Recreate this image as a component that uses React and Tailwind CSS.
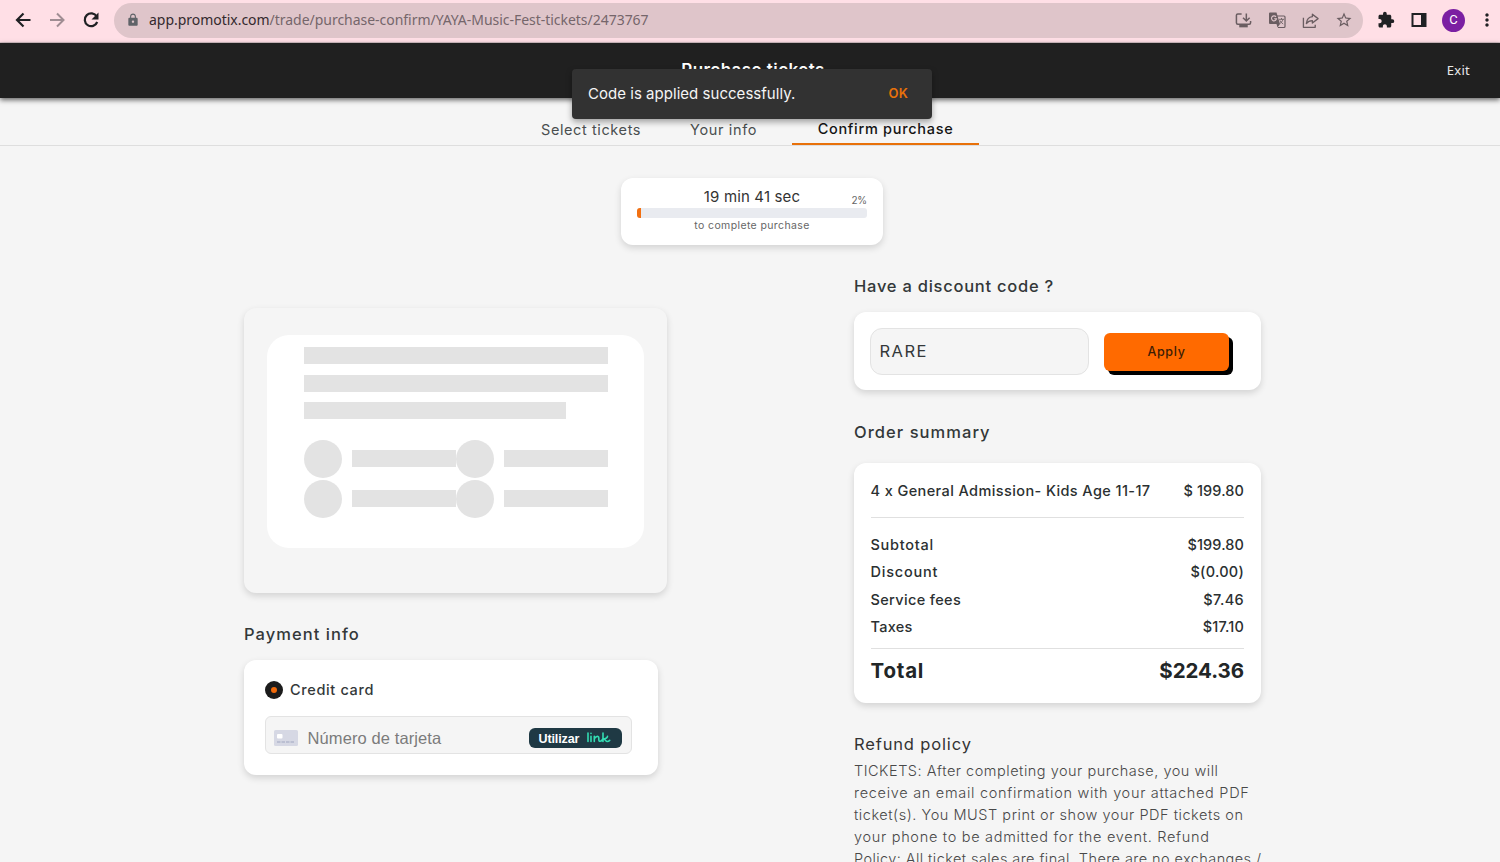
import { MdLock, MdStarBorder, MdExtension, MdMoreVert } from 'react-icons/md';

const summary = [
  { label: 'Subtotal', value: '$199.80', labelCls: 'tracking-[0.75px]', valueCls: 'tracking-[0.1px]' },
  { label: 'Discount', value: '$(0.00)', labelCls: 'tracking-[0.8px]', valueCls: 'tracking-[0.25px]' },
  { label: 'Service fees', value: '$7.46', labelCls: 'tracking-[0.35px]', valueCls: 'tracking-[0.35px]' },
  { label: 'Taxes', value: '$17.10', labelCls: 'tracking-[0.3px]', valueCls: 'tracking-[0.15px]' },
];

const refundLines = [
  { text: 'TICKETS: After completing your purchase, you will', cls: 'tracking-[0.51px]' },
  { text: 'receive an email confirmation with your attached PDF', cls: 'tracking-[0.7px]' },
  { text: 'ticket(s). You MUST print or show your PDF tickets on', cls: 'tracking-[0.54px]' },
  { text: 'your phone to be admitted for the event. Refund', cls: 'tracking-[0.7px]' },
  { text: 'Policy: All ticket sales are final. There are no exchanges /', cls: 'tracking-[0.42px]' },
];

function BrowserBar() {
  return (
    <div className="flex h-[43px] items-center gap-3 border-b border-[#d9c3c8] bg-[#ffdfe6] pb-0.5 pl-3 text-[#202124]">
      <svg viewBox="0 0 22 22" className="size-[22px] shrink-0" fill="none" stroke="currentColor" strokeWidth="2.2">
        <path d="M18.500 11H5.500M11.500 4.500 5 11l6.500 6.500" />
      </svg>
      <svg viewBox="0 0 22 22" className="size-[22px] shrink-0 text-[#a08d93]" fill="none" stroke="currentColor" strokeWidth="2">
        <path d="M4 11h13M11 4.500l6.500 6.500-6.500 6.500" />
      </svg>
      <svg viewBox="0 0 22 22" className="size-[22px] shrink-0" fill="none" stroke="currentColor" strokeWidth="2.2">
        <path d="M16.700 7.500A6.400 6.400 0 1 0 17.200 13" />
        <path d="M18.500 3.500v7h-7z" fill="currentColor" stroke="none" />
      </svg>
      <div className="flex h-[35px] w-[1249px] shrink-0 items-center rounded-full bg-[#dfc5ca] pl-3 font-['Noto_Sans','Open_Sans',sans-serif] text-[#5f6368]">
        <MdLock className="size-[14px]" />
        <span className="ml-[9px] text-sm tracking-[-0.03px] text-[#75666b]">
          <span className="text-[#33292d]">app.promotix.com</span>/trade/purchase-confirm/YAYA-Music-Fest-tickets/2473767
        </span>
        <div className="mr-[10px] ml-auto flex items-center gap-[16px] text-[#6a5d61]">
          <svg viewBox="0 0 18 18" className="size-[17px]" fill="none" stroke="currentColor" strokeWidth="1.6">
            <path d="M7 2H3a1.500 1.500 0 0 0-1.500 1.500v8A1.500 1.500 0 0 0 3 13h12a1.500 1.500 0 0 0 1.500-1.500V9.500" />
            <path d="M12 1.500v7.500M8.500 6l3.500 3.500L15.500 6" />
            <path d="M4.500 15h9" strokeWidth="2.500" />
          </svg>
          <svg viewBox="0 0 18 18" className="size-[18px]" fill="none">
            <path d="M8 5h8a1 1 0 0 1 1 1v9.500a1 1 0 0 1-1 1h-6" stroke="currentColor" strokeWidth="1.200" />
            <path d="M2 1.500h6.500l3.500 11.500H2a1 1 0 0 1-1-1V2.500a1 1 0 0 1 1-1zM8.500 13h3.500l-2.500 3.500z" fill="currentColor" />
            <path d="M8 5.800a2.500 2.500 0 1 0 .5 1.900H6.200" stroke="#dfc5ca" strokeWidth="1.100" />
            <path d="M11 8.300h5M13.500 7v1.300M15 8.300c-.500 2-2 3.500-3 4.200M12 9.500c.800 1.600 2 2.800 3.200 3.500" stroke="currentColor" strokeWidth="0.900" />
          </svg>
          <svg viewBox="0 0 18 18" className="size-[17px]" fill="none" stroke="currentColor" strokeWidth="1.400" strokeLinejoin="round">
            <path d="M1.500 6v10.200H14V13.500" />
            <path d="M11 2.300 17 7l-6 4.700V9.200C8 9.200 6.200 10 4.600 12.200 5 8.200 7.200 5.300 11 4.900z" />
          </svg>
          <MdStarBorder className="size-[18px]" />
        </div>
      </div>
      <MdExtension className="ml-0.5 size-[18px] shrink-0" />
      <svg viewBox="0 0 16 16" className="ml-1 size-[16px] shrink-0">
        <path d="M.500 1h15v14H.500zM2.500 3v10H10V3z" fill="currentColor" fillRule="evenodd" />
      </svg>
      <span className="ml-[3px] flex size-[23px] shrink-0 items-center justify-center rounded-full bg-[#7b1fa2] font-[Roboto,sans-serif] text-[13px] text-white">
        C
      </span>
      <MdMoreVert className="size-[20px] shrink-0" />
    </div>
  );
}

function Header() {
  return (
    <header className="relative z-10 flex h-[55px] items-center justify-end bg-[#202020] pr-[30px] shadow-[0_2px_5px_rgba(0,0,0,0.6)]">
      <h1 className="mr-[622px] text-[17px] font-semibold tracking-[0.45px] text-white">Purchase tickets</h1>
      <span className="font-['Noto_Sans',sans-serif] text-[13px] tracking-[0.25px] text-[#e8e8e8]">Exit</span>
    </header>
  );
}

function Snackbar() {
  return (
    <div className="absolute top-[69px] left-[572px] z-20 flex h-[50px] w-[360px] items-center justify-between rounded bg-[#323232] pr-6 pl-4 shadow-[0_3px_6px_rgba(0,0,0,0.35)]">
      <span className="text-[15px] tracking-[0.03px] text-[#f5f5f5]">Code is applied successfully.</span>
      <span className="text-[13px] font-semibold tracking-[0.2px] text-[#e8710a]">OK</span>
    </div>
  );
}

function Tabs() {
  return (
    <nav className="flex h-12 border-b border-[#dedede] pl-[541px] text-[14.500px] text-[#4a4f50]">
      <span className="w-[149px] pt-[21px] tracking-[0.6px]">Select tickets</span>
      <span className="w-[102px] pt-[21px] tracking-[0.65px]">Your info</span>
      <span className="w-[187px] border-b-2 border-[#e8710a] pt-5 text-center font-medium tracking-[0.7px] text-[#141414]">
        Confirm purchase
      </span>
    </nav>
  );
}

function Timer() {
  return (
    <div className="mt-8 ml-[621px] h-[67px] w-[262px] rounded-xl bg-white px-4 pt-2.5 shadow-[0_3px_7px_rgba(0,0,0,0.14)]">
      <div className="relative h-5 text-center text-[15px] leading-[18px] tracking-[0.15px] text-[#333]">
        19 min 41 sec
        <span className="absolute top-[3px] right-0 text-[10px] tracking-[-0.2px] text-[#666]">2%</span>
      </div>
      <div className="h-2.5 overflow-hidden rounded-[3px] bg-[#e9ebf0]">
        <div className="h-full w-1 bg-[#f27011]" />
      </div>
      <div className="pt-px text-center text-[10.500px] leading-[14px] tracking-[0.38px] text-[#666]">to complete purchase</div>
    </div>
  );
}

function SkeletonRow() {
  return (
    <div className="flex h-[38px] items-center">
      <div className="size-[38px] rounded-full bg-[#e3e3e3]" />
      <div className="ml-2.5 h-[17px] w-[104px] bg-[#e3e3e3]" />
      <div className="size-[38px] rounded-full bg-[#e3e3e3]" />
      <div className="ml-2.5 h-[17px] w-[104px] bg-[#e3e3e3]" />
    </div>
  );
}

function Skeleton() {
  return (
    <div className="h-[285px] w-[423px] rounded-xl bg-[#f5f5f5] px-[23px] pt-[27px] shadow-[0_3px_7px_rgba(0,0,0,0.14)]">
      <div className="h-[213px] w-[377px] rounded-[22px] bg-white px-[36.500px] pt-3">
        <div className="h-[17px] w-[304px] bg-[#e3e3e3]" />
        <div className="mt-[10.500px] h-[17px] w-[304px] bg-[#e3e3e3]" />
        <div className="mt-[10.500px] mb-[20.500px] h-[17px] w-[262px] bg-[#e3e3e3]" />
        <SkeletonRow />
        <div className="h-0.5" />
        <SkeletonRow />
      </div>
    </div>
  );
}

function CardField() {
  return (
    <div className="mt-4 flex h-[38px] w-[367px] items-center rounded-md border border-[#e3e3e3] bg-[#f5f5f5] pr-[9px] pl-2">
      <svg viewBox="0 0 24 16" className="mt-1.5 h-4 w-6">
        <rect width="24" height="16" rx="1.500" fill="#d6d8e4" />
        <rect x="3" y="4" width="5.500" height="4.500" rx="1" fill="#fff" />
        <path d="M3 12h18" stroke="#b3b7cb" strokeWidth="1.500" strokeDasharray="3.500 1" />
      </svg>
      <span className="mt-1.5 ml-2.5 font-['Liberation_Sans',sans-serif] text-[16.500px] tracking-[0.1px] text-[#7b7b7b]">
        Número de tarjeta
      </span>
      <span className="mt-1.5 ml-auto flex h-5 w-[93px] items-center rounded-md bg-[#1f3944] pl-2.5">
        <span className="pt-0.5 font-['Liberation_Sans',sans-serif] text-[12.500px] font-bold tracking-[-0.1px] text-white">Utilizar</span>
        <svg viewBox="0 0 25 14" className="ml-[7px] h-[14px] w-[25px]" fill="none" stroke="#33ddb3" strokeWidth="1.600" strokeLinecap="round" strokeLinejoin="round">
          <path d="M2 2v8.500M5 5.300v5.200M5 2.400v.1M8.300 5.300v5.200M8.300 8c1-2.500 4.500-4 4.500-1v1.500c0 2.500 2.200 2.500 4-.500M17 2v8.500M17 8c2-.300 4.300-1.300 4.500-2.700M17.500 8c1.800 0 2 2.500 3.800 2.500 1 0 1.700-.400 2.400-1.100" />
        </svg>
      </span>
    </div>
  );
}

function PaymentInfo() {
  return (
    <section>
      <h2 className="mt-[29px] h-6 text-[16.500px] leading-6 font-medium tracking-[1.05px] text-[#333839]">Payment info</h2>
      <div className="mt-[14px] h-[115px] w-[414px] rounded-xl bg-white pt-5 pl-[20.500px] shadow-[0_3px_7px_rgba(0,0,0,0.14)]">
        <div className="flex h-5 items-center gap-[7.500px]">
          <span className="flex size-[18px] items-center justify-center rounded-full bg-[#1c1c1c]">
            <span className="size-1.5 rounded-full bg-[#f26a0a]" />
          </span>
          <span className="text-[14.500px] font-medium tracking-[0.65px] text-[#333839]">Credit card</span>
        </div>
        <CardField />
      </div>
    </section>
  );
}

function Discount() {
  return (
    <section>
      <h2 className="h-6 text-[16.500px] leading-6 font-medium tracking-[0.75px] text-[#333839]">Have a discount code ?</h2>
      <div className="mt-[14px] flex h-[78px] gap-[15.500px] rounded-xl bg-white pt-4 pl-[15.500px] shadow-[0_3px_7px_rgba(0,0,0,0.14)]">
        <div className="flex h-[47px] w-[219px] items-center rounded-xl border border-[#e3e3e3] bg-[#f5f5f5] pl-[9px] text-[16.500px] tracking-[1.500px] text-[#333839]">
          RARE
        </div>
        <button className="mt-[5px] h-[38px] w-[125px] rounded-md bg-[#ff6a00] text-[12.500px] font-medium tracking-[0.7px] text-[#3b1c05] shadow-[4px_4px_0_#000]">
          Apply
        </button>
      </div>
    </section>
  );
}

function OrderSummary() {
  return (
    <section>
      <h2 className="mt-[30px] h-6 text-[16.500px] leading-6 font-medium tracking-[1.05px] text-[#333839]">Order summary</h2>
      <div className="mt-[19px] h-[240px] rounded-xl bg-white px-[16.500px] pt-[14px] text-[14.500px] leading-[27px] font-medium text-[#2b3031] shadow-[0_3px_7px_rgba(0,0,0,0.14)]">
        <div className="flex h-[41px] justify-between border-b border-[#e0e0e0]">
          <span className="tracking-[0.4px]">4 x General Admission- Kids Age 11-17</span>
          <span className="tracking-[0.1px]">$ 199.80</span>
        </div>
        <div className="h-[131px] border-b border-[#e0e0e0] pt-[13px]">
          {summary.map((row) => (
            <div key={row.label} className="flex h-[27.300px] justify-between">
              <span className={row.labelCls}>{row.label}</span>
              <span className={row.valueCls}>{row.value}</span>
            </div>
          ))}
        </div>
        <div className="flex justify-between pt-2 text-[20.500px] font-bold text-[#222627]">
          <span className="tracking-[0.8px]">Total</span>
          <span className="tracking-[-0.05px]">$224.36</span>
        </div>
      </div>
    </section>
  );
}

function RefundPolicy() {
  return (
    <section>
      <h2 className="mt-[29px] h-6 text-[16.500px] leading-6 tracking-[0.85px] text-[#333]">Refund policy</h2>
      <div className="mt-1 text-[14.500px] leading-[22px] font-light whitespace-nowrap text-[#484848]">
        {refundLines.map((line) => (
          <p key={line.text} className={line.cls}>{line.text}</p>
        ))}
      </div>
    </section>
  );
}

export default function App() {
  return (
    <div className="relative h-[862px] w-[1500px] overflow-hidden bg-[#f5f5f5] font-[Inter,sans-serif]">
      <BrowserBar />
      <Header />
      <Snackbar />
      <Tabs />
      <Timer />
      <main className="mt-[29px] flex gap-[186px] pl-[244px]">
        <div className="w-[424px] pt-[34px]">
          <Skeleton />
          <PaymentInfo />
        </div>
        <div className="w-[406.500px]">
          <Discount />
          <OrderSummary />
          <RefundPolicy />
        </div>
      </main>
    </div>
  );
}
